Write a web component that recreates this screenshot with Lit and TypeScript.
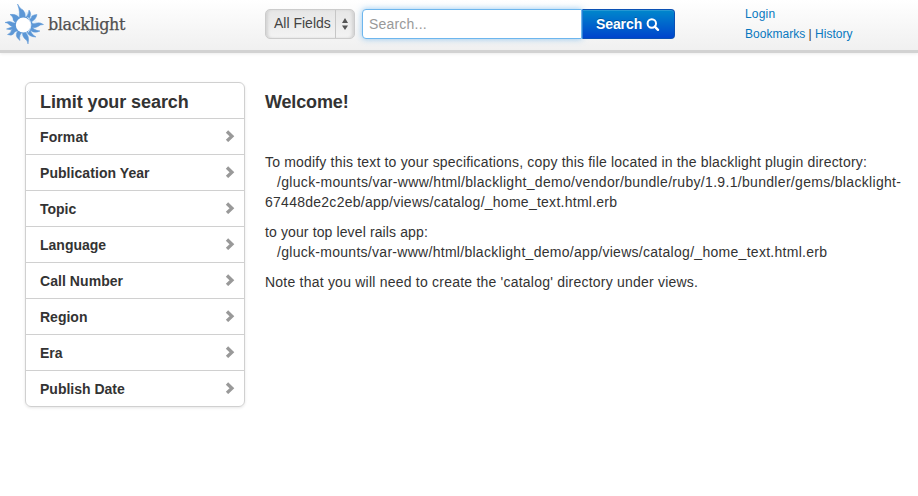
import { LitElement, html, css, svg } from "lit";
import { customElement } from "lit/decorators.js";

const FACETS = [
  ["Format", "f0"],
  ["Publication Year", "f1"],
  ["Topic", "f2"],
  ["Language", "f3"],
  ["Call Number", "f4"],
  ["Region", "f5"],
  ["Era", "f6"],
  ["Publish Date", "f7"],
];

const RAYS = [
  "M18.5 20 Q21 14 17.5 4 Q20 9 23 10 Q26 13 25 19Z",
  "M24.5 18 Q28.5 16 29 10 Q32.5 14 28.5 19.5Z",
  "M28 20 Q31 19.5 32 16 Q34 14.5 37 14.5 Q36 20 30 22.5Z",
  "M31 22 Q33 25 37 23 Q40 22 43.5 24.5 Q40 24.5 38 26.5 Q35 28.5 31 27Z",
  "M31.5 26 Q33 30 40 31 Q34 34 29.5 29.5Z",
  "M30 28.5 Q30.5 34 36 37 Q29 37 26.5 31.5Z",
  "M25 32 Q30 36 28 44 Q27.5 40 25 39 Q22 36 22.5 32Z",
  "M23 32 Q18.5 34 20 40.5 Q13.5 36 18.5 30Z",
  "M19.5 30.5 Q14 31 13.5 34 Q12 36 7.5 34.5 Q11 33 11.5 30 Q14 27 17 27.5Z",
  "M17 28 Q11 31 6.5 29 Q12 27.5 16.5 24Z",
  "M16.5 26 Q12 28 9.5 25 Q8 22.5 5 22.5 Q10 20.5 12.5 22.5 Q14 23.5 17 22Z",
  "M17 23.5 Q12.5 21 13 18 Q12.5 16 10 14.5 Q17 13.5 20 19Z",
];

@customElement("app-root")
export class AppRoot extends LitElement {
  static styles = css`
    :host {
      display: block;
      height: 496px;
      overflow: hidden;
      background: #fff;
      color: #333;
      font: 14px/20px "Liberation Sans", Arial, sans-serif;
    }
    * { box-sizing: border-box; }
    header {
      display: flex;
      height: 53px;
      border-bottom: 3px solid #d2d2d2;
      background: linear-gradient(#fff, #f0f0f0);
      box-shadow: 0 1px 3px rgba(0, 0, 0, 0.08);
    }
    .brand { width: 265px; display: flex; }
    .sun { width: 48px; height: 48px; flex: none; }
    .name {
      font: 16px/24px "DejaVu Serif", serif;
      color: #505050;
      -webkit-text-stroke: 0.25px #505050;
      margin-top: 13px;
      letter-spacing: -0.38px;
    }
    .search { display: flex; width: 480px; padding-top: 9px; }
    .select {
      width: 90px;
      height: 30px;
      border: 1px solid #ccc;
      border-radius: 5px;
      background: linear-gradient(#e6e6e6, #f3f3f3);
      box-shadow: inset 3px 0 3px -1px #d3d3d3, inset -3px 0 3px -1px #d3d3d3;
      display: flex;
      padding-left: 8px;
      line-height: 27px;
      color: #444;
      margin-right: 7px;
    }
    .select .label { width: 62px; border-right: 1px solid #c6c6c6; }
    .arrows { width: 8px; height: 14px; margin: 7px 0 0 5px; }
    .input {
      width: 220px;
      height: 30px;
      border: 1px solid #6db6ee;
      border-radius: 4px 0 0 4px;
      background: #fff;
      box-shadow: 0 0 6px rgba(82, 168, 236, 0.6);
      padding-left: 6px;
      line-height: 29px;
      color: #999;
      letter-spacing: 0.2px;
    }
    .go {
      width: 93px;
      height: 30px;
      border: 1px solid #0a50b4;
      border-left-color: #2a7fd6;
      border-radius: 0 4px 4px 0;
      background: linear-gradient(#0088cc, #0044cc);
      box-shadow: inset 0 1px 0 rgba(255, 255, 255, 0.15);
      color: #fff;
      font-weight: bold;
      line-height: 28px;
      padding-left: 13px;
      display: flex;
      letter-spacing: -0.1px;
      text-shadow: 0 -1px 0 rgba(0, 0, 0, 0.25);
    }
    .go svg { width: 14px; height: 14px; margin: 8px 0 0 4px; }
    nav { padding-top: 4px; font-size: 12px; color: #333; }
    nav a { color: #0878c0; }
    .login { letter-spacing: 0.2px; }
    .nav2 { letter-spacing: 0.02px; }
    .body { display: flex; padding: 29px 0 0 25px; }
    .facets {
      width: 220px;
      height: 325px;
      border: 1px solid #d0d0d0;
      border-radius: 6px;
      box-shadow: 0 1px 3px rgba(0, 0, 0, 0.1);
      font-weight: bold;
    }
    .facets h2 {
      margin: 0;
      height: 35px;
      padding-left: 14px;
      font-size: 18px;
      line-height: 38px;
      letter-spacing: -0.08px;
    }
    .facet {
      height: 36px;
      border-top: 1px solid #d0d0d0;
      padding: 0 9px 0 14px;
      display: flex;
      justify-content: space-between;
      line-height: 36px;
    }
    .f0 { letter-spacing: 0.1px; }
    .f1, .f4 { letter-spacing: 0.06px; }
    .facet svg { width: 10px; height: 12px; margin-top: 11px; }
    main { padding-left: 20px; white-space: nowrap; }
    h1 { font-size: 18px; line-height: 40px; margin: 0 0 30px; letter-spacing: -0.15px; }
    p { margin: 0 0 10px; }
    .row { display: block; }
    .indent { padding-left: 12px; }
    .l1 { letter-spacing: 0.18px; }
    .l2 { letter-spacing: 0.315px; }
    .l3 { letter-spacing: 0.26px; }
    .l4 { letter-spacing: 0.12px; }
    .l5 { letter-spacing: 0.285px; }
    .l6 { letter-spacing: 0.22px; }
  `;

  render() {
    return html`
      <header>
        <div class="brand">
          <svg class="sun" viewBox="0 0 48 48">
            <circle cx="24" cy="24.5" r="13" fill="#dff0fb" opacity="0.7" />
            ${RAYS.map((d) => svg`<path d=${d} fill="#5c97d6" stroke="#5c97d6" stroke-width="0.5" />`)}
            <circle cx="24.3" cy="24.8" r="8" fill="#5c97d6" />
            <path d="M27.5 17Q34 25 28 32.5" fill="none" stroke="#dcecf9" stroke-width="0.9" />
            <circle cx="23.3" cy="25" r="7.5" fill="#fff" />
          </svg>
          <span class="name">blacklight</span>
        </div>
        <div class="search">
          <div class="select">
            <span class="label">All Fields</span>
            <svg class="arrows" viewBox="0 0 8 14"><path d="M1 6L4 1L7 6ZM1 8.5H7L4 13Z" fill="#555" /></svg>
          </div>
          <div class="input">Search...</div>
          <div class="go">
            <span>Search</span>
            <svg viewBox="0 0 14 14"><circle cx="5.8" cy="5.5" r="4.2" fill="none" stroke="#fff" stroke-width="2" /><path d="M8.8 8.6L12 11.8" stroke="#fff" stroke-width="2.4" stroke-linecap="round" /></svg>
          </div>
        </div>
        <nav><div class="row"><a class="login">Login</a></div><div class="row nav2"><a>Bookmarks</a> | <a>History</a></div></nav>
      </header>
      <div class="body">
        <section class="facets">
          <h2><span>Limit your search</span></h2>
          ${FACETS.map(
            ([name, cls]) => html`<div class="facet">
              <span class=${cls}>${name}</span>
              <svg viewBox="0 0 10 12"><path d="M2 1.5L6.9 6.2L2 10.9" fill="none" stroke="#999" stroke-width="3.3" /></svg>
            </div>`
          )}
        </section>
        <main>
          <h1>Welcome!</h1>
          <p>
            <span class="row l1">To modify this text to your specifications, copy this file located in the blacklight plugin directory:</span>
            <span class="row indent l2">/gluck-mounts/var-www/html/blacklight_demo/vendor/bundle/ruby/1.9.1/bundler/gems/blacklight-</span>
            <span class="row l3">67448de2c2eb/app/views/catalog/_home_text.html.erb</span>
          </p>
          <p>
            <span class="row l4">to your top level rails app:</span>
            <span class="row indent l5">/gluck-mounts/var-www/html/blacklight_demo/app/views/catalog/_home_text.html.erb</span>
          </p>
          <p><span class="row l6">Note that you will need to create the 'catalog' directory under views.</span></p>
        </main>
      </div>
    `;
  }
}
